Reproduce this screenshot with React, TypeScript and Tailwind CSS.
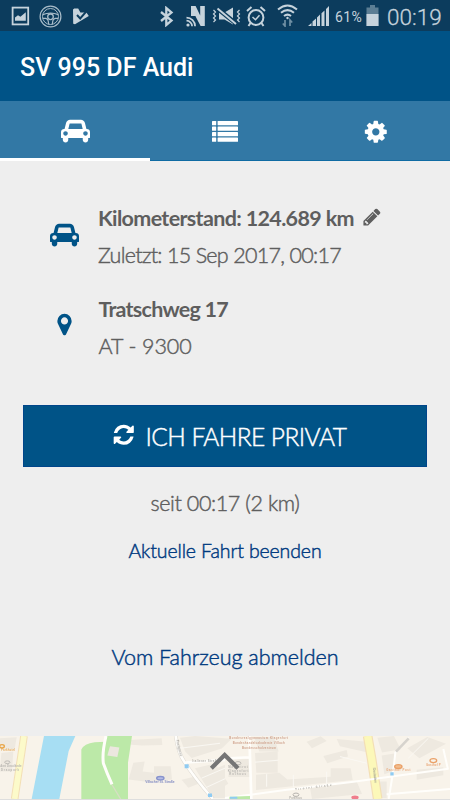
import type { ReactNode } from "react";

const CAR =
  "M480 1088q0-66-47-113t-113-47-113 47-47 113 47 113 113 47 113-47 47-113zm36-320h1016l-89-357q-2-8-14-17.5t-21-9.5h-768q-9 0-21 9.5t-14 17.5zm1372 320q0-66-47-113t-113-47-113 47-47 113 47 113 113 47 113-47 47-113zm160-96v384q0 14-9 23t-23 9h-96v128q0 80-56 136t-136 56-136-56-56-136v-128h-1024v128q0 80-56 136t-136 56-136-56-56-136v-128h-96q-14 0-23-9t-9-23v-384q0-93 65.5-158.5t158.5-65.5h28l105-419q23-94 104-157.5t179-63.5h768q98 0 179 63.5t104 157.5l105 419h28q93 0 158.5 65.5t65.5 158.5z";
const COG =
  "M1152 896q0-106-75-181t-181-75-181 75-75 181 75 181 181 75 181-75 75-181zm512-109v222q0 12-8 23t-20 13l-185 28q-19 54-39 91 35 50 107 138 10 12 10 25t-9 23q-27 37-99 108t-94 71q-12 0-26-9l-138-108q-44 23-91 38-16 136-29 186-7 28-36 28h-222q-14 0-24.5-8.5t-11.5-21.5l-28-184q-49-16-90-37l-141 107q-10 9-25 9-14 0-25-11-126-114-165-168-7-10-7-23 0-12 8-23 15-21 51-66.5t54-70.5q-27-50-41-99l-183-27q-13-2-21-12.5t-8-23.5v-222q0-12 8-23t19-13l186-28q14-46 39-92-40-57-107-138-10-12-10-24 0-10 9-23 26-36 98.5-107.5t94.5-71.5q13 0 26 10l138 107q44-23 91-38 16-136 29-186 7-28 36-28h222q14 0 24.5 8.5t11.5 21.5l28 184q49 16 90 37l142-107q9-9 24-9 13 0 25 10 129 119 165 170 7 8 7 22 0 12-8 23-15 21-51 66.5t-54 70.5q26 50 41 98l183 28q13 2 21 12.5t8 23.5z";
const REFRESH =
  "M1639 1056q0 5-1 7-64 268-268 434.5t-478 166.5q-146 0-282.5-55t-243.5-157l-129 129q-19 19-45 19t-45-19-19-45v-448q0-26 19-45t45-19h448q26 0 45 19t19 45-19 45l-137 137q71 66 161 102t187 36q134 0 250-65t186-179q11-17 53-117 8-23 30-23h192q13 0 22.5 9.5t9.5 22.5zm25-800v448q0 26-19 45t-45 19h-448q-26 0-45-19t-19-45 19-45l138-138q-148-137-349-137-134 0-250 65t-186 179q-11 17-53 117-8 23-30 23h-199q-13 0-22.5-9.5t-9.5-22.5v-7q65-268 270-434.5t480-166.5q146 0 284 55.5t245 156.5l130-129q19-19 45-19t45 19 19 45z";
const PENCIL =
  "M491 1536l91-91-235-235-91 91v107h128v128h107zm523-928q0-22-22-22-10 0-17 7l-542 542q-7 7-7 17 0 22 22 22 10 0 17-7l542-542q7-7 7-17zm-54-192l416 416-832 832h-416v-416zm683 96q0 53-37 90l-166 166-416-416 166-165q36-38 90-38 53 0 91 38l235 234q37 39 37 91z";
const PIN =
  "M1152 640q0-106-75-181t-181-75-181 75-75 181 75 181 181 75 181-75 75-181zm256 0q0 109-33 179l-364 774q-16 33-47.5 52t-67.5 19-67.5-19-46.5-52l-365-774q-33-70-33-179 0-212 150-362t362-150 362 150 150 362z";

function Glyph({ d, wide = false, className }: { d: string; wide?: boolean; className: string }) {
  return (
    <svg viewBox={wide ? "0 0 2048 1792" : "0 0 1792 1792"} className={`shrink-0 ${className}`} fill="currentColor">
      <path d={d} />
    </svg>
  );
}

function StatusBar() {
  return (
    <div className="flex h-[31px] shrink-0 items-start bg-[#0c3c5d] text-[#c6d3dc]">
      {/* left notifications */}
      <svg className="ml-[11px] mt-[6px] h-5 w-[19px]" viewBox="0 0 19 20">
        <rect x="1.6" y="1.6" width="15.6" height="16.8" fill="none" stroke="currentColor" strokeWidth="1.8" />
        <path d="M4 14.800v-3.200l3-2.400 2.400 1.600 5.400-4.600v8.600z" fill="currentColor" />
      </svg>
      <svg className="ml-[8.5px] mt-[4.5px] h-[23px] w-[23px]" viewBox="0 0 23 23" fill="none" stroke="#a9bcc9">
        <circle cx="11.5" cy="11.5" r="10.4" strokeWidth="1.2" />
        <circle cx="11.5" cy="11.5" r="8" strokeWidth="1" />
        <circle cx="11.5" cy="11.8" r="2.8" strokeWidth="1.3" />
        <path d="M3.7 9.6q7.800-3 15.600 0M3.800 13.400h3q2 .5 2.400 2.500l.5 3.600M19.200 13.400h-3q-2 .5-2.400 2.500l-.5 3.600" strokeWidth="1.2" />
      </svg>
      <svg className="ml-[10.5px] mt-[7px] h-[18px] w-[18px]" viewBox="0 0 18 18">
        <path d="M1 2.400L2.200 1.400 6.200 1.600 8.400 5.400 14.400 5.600 16.800 9 3 17.200 1.200 16.800z" fill="currentColor" />
        <path d="M5 8l3.200 3.400 6.400-7.200" fill="none" stroke="#0c3c5d" strokeWidth="2" />
      </svg>

      {/* connectivity icons */}
      <svg className="ml-[69px] mt-[5.5px] h-[21px] w-[15px]" viewBox="0 0 15 21" fill="none" stroke="currentColor" strokeWidth="2.3">
        <path d="M2 6l10.500 8.600L7.300 19V2l5.200 4.400L2 15" />
      </svg>
      <svg className="ml-[11.5px] mt-[4.5px] h-[22px] w-5" viewBox="0 0 20 22">
        <path d="M5 11V1h4.600l4.600 9.400V1h4.600v20h-4.200L9.600 11.500V11z" fill="currentColor" />
        <g fill="none" stroke="currentColor" strokeWidth="1.7">
          <path d="M.5 12.700a8.600 8.600 0 0 1 8.600 8.600M.5 15.700a5.600 5.600 0 0 1 5.600 5.600" />
        </g>
        <circle cx="2" cy="20" r="1.6" fill="currentColor" />
      </svg>
      <svg className="ml-[6px] mt-[6px] h-5 w-[30px]" viewBox="0 0 30 20">
        <path d="M7 6.500h5.500L21 1.500v17L12.500 13.500H7z" fill="currentColor" />
        <path d="M6 3l18 14.500" stroke="#0c3c5d" strokeWidth="4.5" />
        <path d="M5.500 2.500L24 18" stroke="currentColor" strokeWidth="2" />
        <path d="M1.500 4l2 2-2 2 2 2-2 2 2 2-2 2M27.500 4l-2 2 2 2-2 2 2 2-2 2 2 2" fill="none" stroke="currentColor" strokeWidth="1.2" />
      </svg>
      <svg className="ml-[4.5px] mt-[5.5px] h-[21px] w-5" viewBox="0 0 20 21" fill="none" stroke="currentColor">
        <circle cx="10" cy="11.5" r="7.4" strokeWidth="2" />
        <path d="M1 5l4.500-4M19 5l-4.500-4M4.500 17L2.500 20M15.500 17l2 3" strokeWidth="2" />
        <path d="M6.500 11l3 2.800 4-4.500" strokeWidth="1.5" />
      </svg>
      <svg className="ml-[11px] mt-[4px] h-[23px] w-[21px]" viewBox="0 0 21 23" fill="none" stroke="currentColor" strokeWidth="2">
        <path d="M1 5.500q9.500-8 19 0M4 8.800q6.500-5.400 13 0M7 12q3.500-2.800 7 0" />
        <circle cx="10.5" cy="14" r="1.2" fill="currentColor" stroke="none" />
        <path d="M8 16v6l-2.200-2.500M13 22v-6l2.200 2.500" stroke="#7190a4" strokeWidth="1.7" />
      </svg>
      <svg className="ml-[9.5px] mt-[5px] h-[22px] w-[22px]" viewBox="0 0 22 22" fill="currentColor">
        <path d="M0 21h3.500v-3zM4.500 21H8v-7.500l-3.500 3zM9 21h3V9.500L9 12.500zM13.500 21h3V5.500l-3 2.800zM18 21h3V1l-3 3z" />
      </svg>
      <span className="ml-[5.5px] mt-[8px] w-[30px] font-[Roboto] text-[14px] leading-[18px] tracking-[0.4px]">61%</span>
      <svg className="ml-[1px] mt-[5px] h-[21px] w-[13px]" viewBox="0 0 13 21">
        <path d="M4 0h5v2.500h3.500V21H.5V2.500H4z" fill="#5c7e94" />
        <path d="M.5 9h12v12H.5z" fill="currentColor" />
      </svg>
      <span className="ml-[8px] mt-[4px] font-[Roboto] text-[22.5px] font-light leading-[26px] [-webkit-text-stroke:0.3px]">00:19</span>
    </div>
  );
}

function Tab({ active = false, children }: { active?: boolean; children: ReactNode }) {
  return (
    <div
      className={`flex flex-1 items-center justify-center pt-[3px] ${
        active ? "border-b-[3px] border-white" : "border-b border-[#0f6ba3] pb-[2px]"
      }`}
    >
      {children}
    </div>
  );
}

function ListIcon() {
  return (
    <svg className="h-[21px] w-[26px]" viewBox="0 0 26 21" fill="currentColor">
      {[0, 5.5, 11, 16.5].map((y) => (
        <g key={y}>
          <rect x="0" y={y} width="4.2" height="4.3" rx="0.6" />
          <rect x="5.6" y={y} width="20.4" height="4.3" rx="0.6" />
        </g>
      ))}
    </svg>
  );
}

function StreetMap() {
  return (
    <svg className="h-[63px] w-full shrink-0" viewBox="0 33 1350 190" preserveAspectRatio="none">
      <rect y="33" width="1350" height="190" fill="#f8f3ea" />
      {/* building blocks */}
      <g fill="#eee9e0">
        <path d="M0 40l50-3-6 35H0zM4 84l36-4-4 60H0z" />
        <path d="M373 46l112-6 2 20-60 2-54-4zM400 114l34-4-6 30 34 4v-20h50l4 40-70 8-60-8zM545 165l34-8 16 20-30 12z" />
        <path d="M540 38l45-5 110 8-30 30-90 28-20-20zM585 130l60-14 40 60-50 35zM650 130l25-10v100h-40z" />
        <path d="M690 105l60-3v55h-65zM762 36h60l14 44h-58zM765 84l68-4v64h-64zM768 150l70-6 24 20 130-8v-26h60l6 36-290 30z" />
        <path d="M920 50l42-16 18 14-44 22zM970 93l70-18 4 20-62 20zM1010 42l90 8 10 34-90-20zM1132 38l50-5 20 40-56 10zM1145 92l38-6 4 50-34 12zM1222 70l60-34 56 20-80 44zM1250 135l80-8v24l-80 14zM1130 170h30v50h-26zM930 188l140-18 16 38-150 15z" />
      </g>
      <g fill="none" stroke="#faf8f3" strokeWidth="3">
        <path d="M540 70l120-15M605 160l70-30M615 190l60-28M765 112l70-6M800 148v38M1020 95l80 20M1285 40l-60 60M880 150v38M980 140v48" />
      </g>
      {/* river and park */}
      <path d="M132 33h94l-20 45-28 145H95z" fill="#a7def3" />
      <path d="M244 223V74q8-18 40-22l32-2 4-17h76l-12 80v110z" fill="#bce9a8" />
      <path d="M330 64l28 4-6 28-30-4z" fill="#ece7df" />
      <path d="M318 33q-12 50-8 82 10 28 26 64" fill="none" stroke="#fffdfa" strokeWidth="9" />
      <path d="M336 180l26 43" stroke="#d7dec4" strokeWidth="4" />
      {/* main roads */}
      <path d="M72 33L44 223" stroke="#f3dfb5" strokeWidth="23" />
      <path d="M72 33L44 223" stroke="#fcfaca" strokeWidth="17" />
      <path d="M1103 33l12 70 18 120" fill="none" stroke="#f3dfb5" strokeWidth="29" />
      <path d="M1103 33l12 70 18 120" fill="none" stroke="#fcf8b9" strokeWidth="22" />
      {/* side streets */}
      <path d="M527 33q8 52 26 78 30 48 86 112" fill="none" stroke="#ddd9d2" strokeWidth="11" />
      <g fill="none" stroke="#fffefb" strokeWidth="8">
        <path d="M527 33q8 52 26 78 30 48 86 112M556 113l119-8M748 33l6 190M690 100l58-3" />
        <path d="M675 220l180-24 200-24 290-40M1166 223q14-80 20-140l40-45M1160 209l190-16M1330 72l14 62" strokeWidth="6" />
        <path d="M1188 80l38-40" stroke="#d6d3cd" strokeWidth="8" />
      </g>
      <path d="M688 216l62-2v9h-62z" fill="#bce9a8" />
      {/* place names */}
      <g
        fontFamily="Liberation Sans, sans-serif"
        textAnchor="middle"
        fontSize="8.5"
        fontWeight="700"
        fill="#cfa28c"
        className="blur-[0.3px]"
      >
        <text x="776" y="41" textLength="176">Bundesrealgymnasium Klagenfurt</text>
        <text x="776" y="56" textLength="156">Bundeshandelsakademie Villach</text>
        <text x="777" y="72" textLength="102">Bundesschulzentrum</text>
        <text x="480" y="175" fontSize="10" fill="#8790c4" textLength="88">Villacher St. Straße</text>
        <text x="24" y="78" fill="#e5ad61" textLength="42">Parkhotel</text>
        <text x="33" y="127" fill="#b8b6b1" textLength="64">Amt Draulände</text>
        <text x="30" y="138" fill="#b8b6b1" textLength="54">Draupark</text>
        <text x="714" y="131" fill="#b8b6b1" textLength="58">Magistrat</text>
        <text x="714" y="141" fill="#b8b6b1" textLength="62">Klagenfurt</text>
        <text x="713" y="151" fill="#b8b6b1" textLength="50">Rathaus</text>
        <text x="616" y="110" fill="#b3b0aa" textLength="78">Italiener Straße</text>
        <text x="940" y="190" fill="#a5a29c" textLength="110" transform="rotate(-7 940 190)">Tiroler Straße</text>
        <text x="1195" y="140" fill="#e8a778" textLength="72">Gasthof Post</text>
        <text x="1300" y="123" fill="#e8a778" textLength="44">Gasthof P</text>
        <text x="887" y="222" fill="#b8b6b1" textLength="38">Parkhaus</text>
        <text x="1122" y="152" fill="#8f8f88" textLength="45" transform="rotate(84 1122 152)">Ossiacher</text>
        <text x="535" y="70" fill="#a5a29c" textLength="50" transform="rotate(76 535 70)">Postgasse</text>
      </g>
      {/* markers */}
      <g fill="none" strokeWidth="4">
        <ellipse cx="481" cy="160" rx="11" ry="5" fill="#b5bce4" stroke="#8893cd" />
        <ellipse cx="6" cy="64" rx="7" ry="5" stroke="#e9a545" />
        <ellipse cx="22" cy="112" rx="8" ry="4" stroke="#bdbab5" strokeWidth="3" />
        <ellipse cx="714" cy="115" rx="9" ry="5" stroke="#bdbab5" strokeWidth="3" />
        <ellipse cx="888" cy="210" rx="9" ry="5" stroke="#b5b2ad" strokeWidth="3" />
        <ellipse cx="1195" cy="125" rx="11" ry="6" fill="#f2bd8e" stroke="#eaa168" />
        <ellipse cx="1300" cy="107" rx="10" ry="6" stroke="#eaa168" />
        <ellipse cx="1065" cy="218" rx="11" ry="6" fill="#ef7d8c" stroke="none" />
      </g>
      <path d="M554 118h12v12h-12zM624 206h12v11h-12zM1171 142h10v10h-10zM690 216h22v6h-22z" fill="#8fcbf2" />
      <path d="M634 130l40-40 40 40" fill="none" stroke="#757575" strokeWidth="12.5" />
    </svg>
  );
}

export default function App() {
  return (
    <div className="flex h-[800px] w-[450px] flex-col overflow-hidden bg-[#eeeeee] font-[Lato,sans-serif] text-[#5e5e5e]">
      <StatusBar />
      <header className="flex h-[70px] shrink-0 items-center bg-[#005387] pl-5 pt-[3px]">
        <h1 className="font-[Roboto] text-[25px] font-medium leading-8 text-white">SV 995 DF Audi</h1>
      </header>
      <nav className="flex h-[60px] shrink-0 bg-[#3278a5] text-white">
        <Tab active>
          <Glyph d={CAR} wide className="h-[25.4px] w-[29px]" />
        </Tab>
        <Tab>
          <ListIcon />
        </Tab>
        <Tab>
          <Glyph d={COG} className="ml-px mt-px size-[25.6px]" />
        </Tab>
      </nav>

      <main className="flex grow flex-col pt-[39px] text-[21.5px] leading-[37px]">
        <section className="flex pl-[50px]">
          <Glyph d={CAR} wide className="mt-[21.7px] h-[25.4px] w-[29px] text-[#005387]" />
          <div className="ml-[19px] whitespace-nowrap">
            <div className="flex">
              <b className="font-bold tracking-[-0.65px]">Kilometerstand: 124.689 km</b>
              <Glyph d={PENCIL} className="ml-[8.5px] mt-[7px] size-5" />
            </div>
            <p className="font-light tracking-[-0.7px] [-webkit-text-stroke:0.45px]">Zuletzt: 15 Sep 2017, 00:17</p>
          </div>
        </section>
        <section className="mt-[17px] flex pl-[52px]">
          <Glyph d={PIN} className="mt-[21px] size-[25px] text-[#005387]" />
          <div className="ml-[21.5px] whitespace-nowrap">
            <b className="block font-bold tracking-[-0.75px]">Tratschweg 17</b>
            <p className="font-light tracking-[-0.1px] [-webkit-text-stroke:0.45px]">AT - 9300</p>
          </div>
        </section>

        <button className="mx-[23px] mt-10 flex h-[62px] shrink-0 items-center border border-[#00458a] bg-[#005387] pl-[87.5px] text-white">
          <Glyph d={REFRESH} className="mb-[2px] size-[23.5px]" />
          <span className="ml-[10.5px] mt-px text-[24.5px] font-light tracking-[-0.55px] [-webkit-text-stroke:0.45px]">
            ICH FAHRE PRIVAT
          </span>
        </button>

        <p className="mt-[18px] text-center font-light tracking-[-0.4px] [-webkit-text-stroke:0.45px]">seit 00:17 (2 km)</p>
        <a className="mt-[10px] text-center text-[19.5px] font-light tracking-[-0.12px] text-[#003a80] [-webkit-text-stroke:0.45px]">
          Aktuelle Fahrt beenden
        </a>
        <a className="mt-[70px] text-center font-light tracking-[-0.02px] text-[#003a80] [-webkit-text-stroke:0.45px]">
          Vom Fahrzeug abmelden
        </a>
      </main>

      <footer className="flex h-16 shrink-0 flex-col border-b border-[#dedede]">
        <StreetMap />
      </footer>
    </div>
  );
}
